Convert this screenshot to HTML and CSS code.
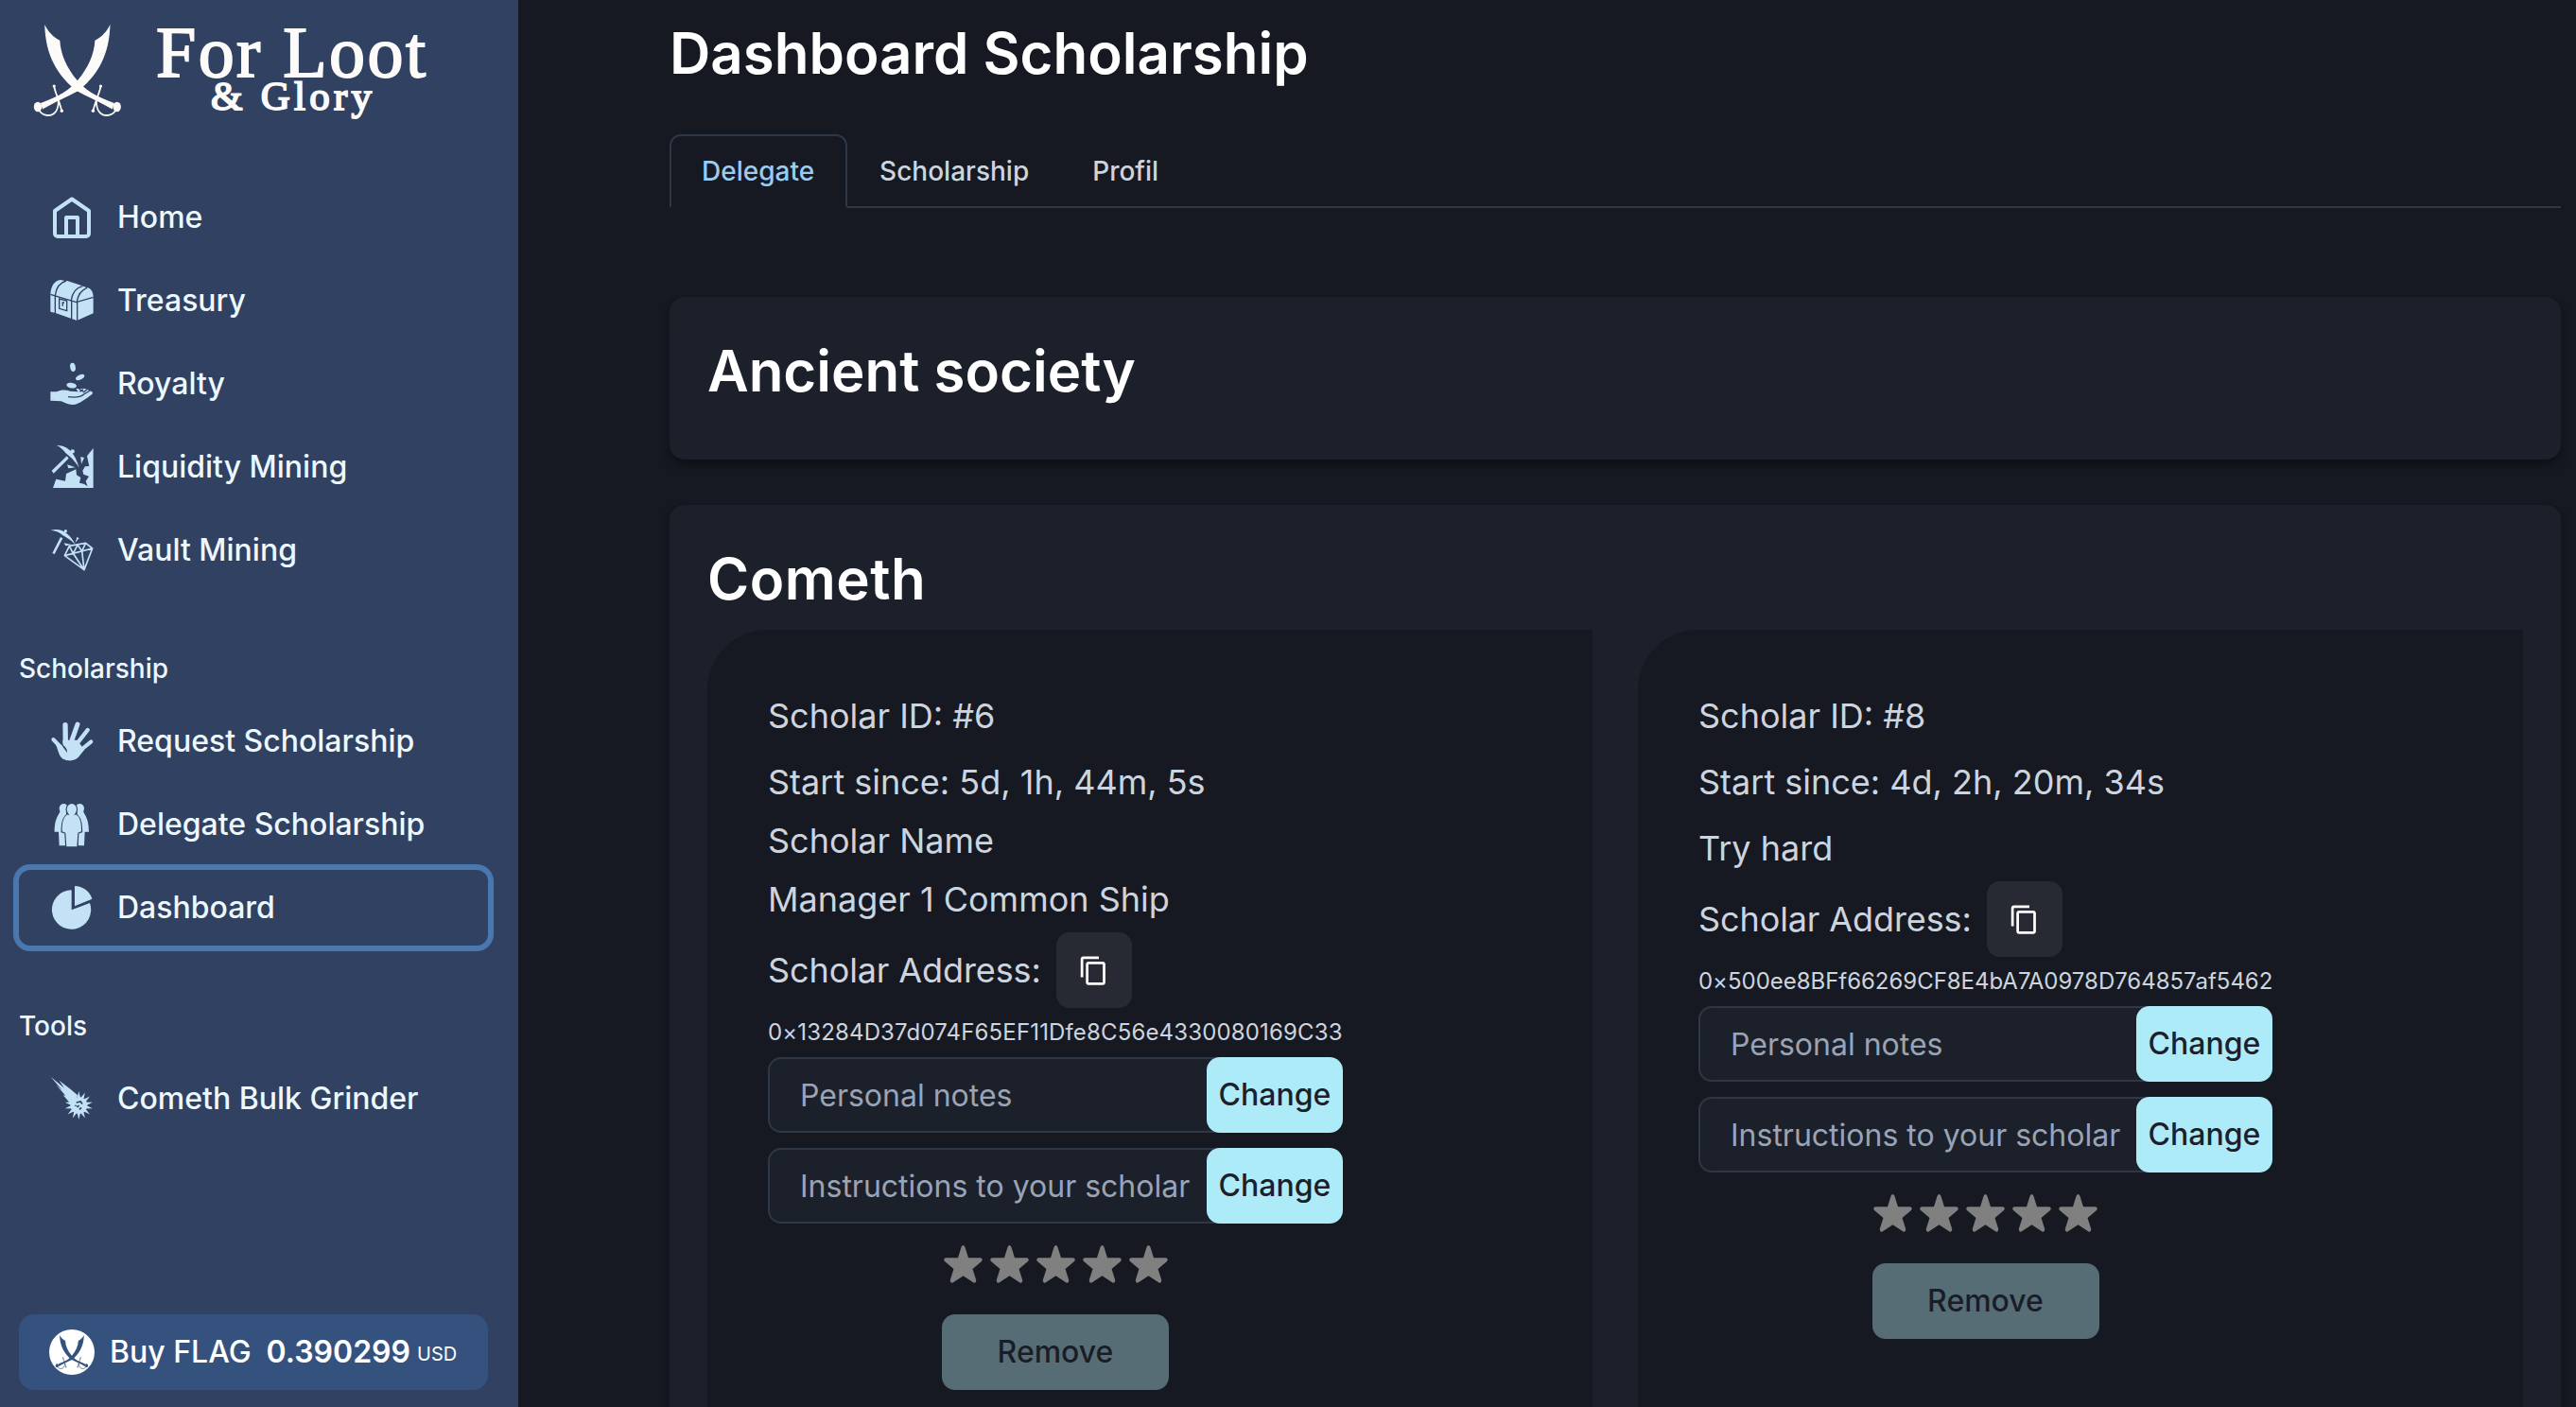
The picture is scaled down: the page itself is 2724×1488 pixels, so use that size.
FILE: index.html
```html
<!DOCTYPE html>
<html lang="en">
<head>
<meta charset="utf-8">
<title>For Loot &amp; Glory – Dashboard Scholarship</title>
<link rel="stylesheet" href="styles.css">
</head>
<body>
<svg class="defs" width="0" height="0" aria-hidden="true">
  <symbol id="sword" viewBox="34 24 96 102">
    <path d="M116.5 26C113 33 108 39 100.400 42.700C99.500 58 93 72 82 85C75 93 68 98 60.700 101.500C54 104.500 48 107 43 109L45 115.500C51 112 57 109 64 105.500C71 102 77 99 82 96.500C91 90 101 79 107 67C113 55 116 42 116.500 26Z"/>
    <ellipse cx="40" cy="113" rx="4.200" ry="5.300"/>
    <path class="sword-guard" d="M57.200 91.500C58 96 59.500 99 61 103.500S64 112 65.200 117M41.500 117C44.500 121 47 122 50.500 122C58 122 61.800 116 61.800 107"/>
    <circle cx="57.200" cy="91" r="1.600"/><circle cx="65.300" cy="117.300" r="1.700"/>
  </symbol>
  <symbol id="swords" viewBox="34 24 96 102">
    <use href="#sword" x="34" y="24" width="96" height="102"/>
    <use href="#sword" x="34" y="24" width="96" height="102" transform="translate(163.700 0) scale(-1 1)"/>
  </symbol>
  <symbol id="copy" viewBox="0 0 24 24">
    <path d="M16 1H4c-1.100 0-2 .9-2 2v14h2V3h12V1zm3 4H8c-1.100 0-2 .9-2 2v14c0 1.100.9 2 2 2h11c1.100 0 2-.9 2-2V7c0-1.100-.9-2-2-2zm0 16H8V7h11v14z"/>
  </symbol>
  <symbol id="star" viewBox="0 0 41 40">
    <path d="M20.500 0Q19.300 0 18.600 1.800L15 13.300H2Q-1 14.500 1 17L10.500 25L6.700 37Q7 40.500 9.500 39.500L20.500 32.300L31.500 39.500Q34 40.500 34.300 37L30.500 25L40 17Q42 14.500 39 13.300H26L22.400 1.800Q21.700 0 20.500 0Z"/>
  </symbol>
</svg>

<div class="app">
  <aside class="sidebar">
    <a class="logo">
      <svg class="logo-mark"><use href="#swords"/></svg>
      <svg class="logo-name" viewBox="0 0 290 126">
        <text x="-1" y="81" font-size="76" textLength="285" lengthAdjust="spacing">For Loot</text>
        <text x="57" y="116" font-size="43" textLength="170" lengthAdjust="spacing">&amp; Glory</text>
      </svg>
    </a>

    <nav class="nav">
      <a class="nav-item">
        <svg class="icon icon-line" viewBox="0 0 48 48"><path d="M24 4.500L6 17V41a3 3 0 0 0 3 3H39a3 3 0 0 0 3-3V17ZM18 44V24H30V44"/></svg>
        <span>Home</span>
      </a>
      <a class="nav-item">
        <svg class="icon" viewBox="36 27 144 144">
          <path d="M40 80C41 54 52 35 72 33L86 36L93 36L130 48L152 56C168 58 176 70 176 87V139L124 162L56 138L40 134Z"/>
          <path class="cut" d="M40 79L122 104L176 88M125 104V162M107 99V157M55 84V140M55 82C58 60 69 42 90 36M106 98C109 74 122 58 142 53M124 102C127 82 137 66 156 58"/>
          <path class="cut" d="M68 93L92 99V131L68 124Z"/><path class="cut" d="M79 103V116M77 105H84"/>
        </svg>
        <span>Treasury</span>
      </a>
      <a class="nav-item">
        <svg class="icon" viewBox="36 291 144 144">
          <ellipse cx="111" cy="310" rx="8.500" ry="14" transform="rotate(-10 111 310)"/>
          <ellipse cx="134" cy="342" rx="15" ry="7.500" transform="rotate(-27 134 342)"/>
          <ellipse cx="107" cy="368" rx="16" ry="8.500" transform="rotate(10 107 368)"/>
          <path d="M40 388H60C75 380 90 382 103 386L128 388L121 378H150L172 388Q176 392 172 396C155 408 136 424 118 428C100 432 84 422 74 418L40 416Z"/>
          <path class="cut" d="M96 404C118 407 136 405 146 396L166 384M128 376L146 389L156 380M133 388L144 380"/>
        </svg>
        <span>Royalty</span>
      </a>
      <a class="nav-item">
        <svg class="icon" viewBox="36 555 144 144">
          <path d="M60 558C78 557 94 566 102 574C116 588 124 606 131 629C121 614 112 602 102 594L88 582C80 572 72 564 60 558Z"/>
          <path d="M44 638L92 592L98 599L50 647Z"/><circle cx="110" cy="577" r="6.500"/>
          <path d="M136 594L147 597L138 617ZM93 619L119 628L97 631Z"/>
          <path d="M176 567V693H48L58 665L87 671L90 648L121 634L123 652L136 660L132 677L146 680L158 688L152 672L162 656L145 650L142 638L150 625L163 624L156 592Z"/>
        </svg>
        <span>Liquidity Mining</span>
      </a>
      <a class="nav-item">
        <svg class="icon" viewBox="36 819 144 144">
          <path d="M41 827C62 822 78 826 92 838C104 848 112 858 118 872C104 858 94 852 80 844C70 834 58 829 41 827Z"/>
          <path d="M72 849L79 853L53 903L46 900Z"/><circle cx="88" cy="830" r="5"/>
          <path d="M119 867L124 849L131 852ZM83 868L108 873L88 877Z"/>
          <path class="facet" d="M85 908L100 877L152 868L173 885L147 953ZM85 908L173 885M100 877L112 901L147 953M112 901L126 874L140 893L147 953M140 893L152 868"/>
        </svg>
        <span>Vault Mining</span>
      </a>
    </nav>

    <h6 class="nav-label">Scholarship</h6>
    <nav class="nav">
      <a class="nav-item">
        <svg class="icon" viewBox="36 30 144 144">
          <path class="finger f16" d="M87 50L88 110"/><path class="finger f15" d="M126 48L106 104"/>
          <path class="finger f13" d="M158 66L122 112"/><path class="finger f12" d="M169 103L126 138"/>
          <path class="finger f12" d="M49 96L72 120"/>
          <path d="M52 104C62 118 64 138 72 150C82 166 118 169 130 151L148 128L124 98H79V108L92 128L93 138L76 115L62 104Z"/>
        </svg>
        <span>Request Scholarship</span>
      </a>
      <a class="nav-item">
        <svg class="icon" viewBox="36 294 144 144">
          <g id="bystander"><ellipse cx="82" cy="315" rx="14" ry="15"/><path d="M70 325C68 335 53 345 53 389H66L68 433H87L90 334V320Z"/></g>
          <use href="#bystander" transform="translate(215 0) scale(-1 1)"/>
          <g class="front"><path d="M97 333H118C131 339 139 352 138 388L127 392L124 436H91L88 392L77 388C76 352 84 339 97 333Z"/><ellipse cx="107.500" cy="318" rx="15.500" ry="18"/></g>
          <path d="M99 328H116V345H99Z"/>
        </svg>
        <span>Delegate Scholarship</span>
      </a>
      <a class="nav-item active">
        <svg class="icon" viewBox="36 558 144 144"><path d="M107 574A62 62 0 1 0 165 615L107 637ZM117 561V625L172 602A58 58 0 0 0 117 561Z"/></svg>
        <span>Dashboard</span>
      </a>
    </nav>

    <h6 class="nav-label">Tools</h6>
    <nav class="nav">
      <a class="nav-item">
        <svg class="icon" viewBox="36 1164 144 144">
          <path d="M41 1166L84 1202L68 1178L104 1206L128 1226L102 1250L80 1224L88 1226L58 1192L78 1210Z"/>
          <circle cx="130" cy="1257" r="27"/>
          <polygon id="spike" points="130,1212 141,1257 130,1302 119,1257"/>
          <use href="#spike" transform="rotate(26 130 1257)"/><use href="#spike" transform="rotate(51 130 1257)"/>
          <use href="#spike" transform="rotate(77 130 1257)"/><use href="#spike" transform="rotate(103 130 1257)"/>
          <use href="#spike" transform="rotate(129 130 1257)"/><use href="#spike" transform="rotate(154 130 1257)"/>
          <path class="crater" d="M122 1248L136 1245L141 1253M124 1262L131 1258M138 1264L132 1270M120 1256V1260"/>
        </svg>
        <span>Cometh Bulk Grinder</span>
      </a>
    </nav>

    <a class="buy">
      <span class="coin"><svg><use href="#swords"/></svg></span>
      <span class="buy-name">Buy FLAG</span>
      <span class="buy-price">0.390299</span>
      <span class="buy-unit">USD</span>
    </a>
  </aside>

  <main class="main">
    <h1 class="title">Dashboard Scholarship</h1>
    <div class="tabs">
      <button class="tab selected">Delegate</button>
      <button class="tab">Scholarship</button>
      <button class="tab">Profil</button>
    </div>

    <section class="panel">
      <h2 class="title">Ancient society</h2>
    </section>

    <section class="panel games">
      <h2 class="title">Cometh</h2>
      <div class="scholars">
        <article class="scholar">
          <div class="scholar-body">
            <p class="line">Scholar ID: #6</p>
            <p class="line">Start since: 5d, 1h, 44m, 5s</p>
            <p class="line long-name">Scholar Name<br>Manager 1 Common Ship</p>
            <div class="address-row"><span>Scholar Address:</span><button class="copy"><svg><use href="#copy"/></svg></button></div>
            <p class="address loose">0×13284D37d074F65EF11Dfe8C56e4330080169C33</p>
            <div class="field"><input type="text" placeholder="Personal notes"><button class="change">Change</button></div>
            <div class="field"><input type="text" placeholder="Instructions to your scholar"><button class="change">Change</button></div>
            <div class="stars"><svg><use href="#star"/></svg><svg><use href="#star"/></svg><svg><use href="#star"/></svg><svg><use href="#star"/></svg><svg><use href="#star"/></svg></div>
            <button class="remove">Remove</button>
          </div>
        </article>
        <article class="scholar">
          <div class="scholar-body narrow">
            <p class="line">Scholar ID: #8</p>
            <p class="line">Start since: 4d, 2h, 20m, 34s</p>
            <p class="line">Try hard</p>
            <div class="address-row"><span>Scholar Address:</span><button class="copy"><svg><use href="#copy"/></svg></button></div>
            <p class="address">0×500ee8BFf66269CF8E4bA7A0978D764857af5462</p>
            <div class="field"><input type="text" placeholder="Personal notes"><button class="change">Change</button></div>
            <div class="field"><input type="text" placeholder="Instructions to your scholar"><button class="change">Change</button></div>
            <div class="stars"><svg><use href="#star"/></svg><svg><use href="#star"/></svg><svg><use href="#star"/></svg><svg><use href="#star"/></svg><svg><use href="#star"/></svg></div>
            <button class="remove">Remove</button>
          </div>
        </article>
      </div>
    </section>
  </main>
</div>
</body>
</html>
```
FILE: styles.css
```css
:root {
  --side: #304162;
  --page: #171922;
  --panel: #1c202b;
  --line: #2e3746;
  --ice: #c4e2f6;
  --cyan: #aeebf8;
}

* { box-sizing: border-box; margin: 0; padding: 0; }

html, body { height: 100%; }

body {
  overflow: hidden;
  background: var(--page);
  color: #ccd5df;
  font: 400 32px/48px Inter, sans-serif;
}

button, input { border: 0; font: inherit; color: inherit; }
.defs { position: absolute; }

.app { display: flex; height: 100vh; }

/* Sidebar */
.sidebar {
  display: flex;
  flex-direction: column;
  flex: none;
  width: 548px;
  height: 100vh;
  padding: 0 32px 18px 20px;
  background: var(--side);
  color: #edf7fe;
}

.logo { display: flex; gap: 36px; height: 190px; padding-left: 14px; color: #fdfafa; fill: currentColor; }
.logo-mark { width: 96px; height: 102px; margin-top: 24px; }
.logo-name {
  width: 290px;
  height: 126px;
  overflow: visible;
  font-family: "Liberation Serif", serif;
  stroke: currentColor;
  stroke-width: 1.8;
}
.sword-guard { fill: none; stroke: currentColor; stroke-width: 1.8; }

.nav { display: flex; flex-direction: column; gap: 8px; }
.nav-item {
  display: flex;
  align-items: center;
  gap: 24px;
  height: 80px;
  padding-left: 32px;
  border-radius: 12px;
  font-weight: 500;
}
.nav-item.active { box-shadow: 0 0 0 6px #4a77ad; }
.nav-label { margin: 61px 0 13px; height: 48px; font-size: 28px; font-weight: 500; }

.icon { width: 48px; height: 48px; flex: none; fill: var(--ice); }
.icon-line { fill: none; stroke: var(--ice); stroke-width: 4; stroke-linejoin: round; }
.cut { fill: none; stroke: var(--side); stroke-width: 4; }
.facet { fill: none; stroke: var(--ice); stroke-width: 5; stroke-linejoin: round; }
.finger { stroke: var(--ice); stroke-linecap: round; }
.f16 { stroke-width: 16; }
.f15 { stroke-width: 15; }
.f13 { stroke-width: 13; }
.f12 { stroke-width: 12; }
.front { stroke: var(--side); stroke-width: 7; paint-order: stroke; }
.crater { fill: none; stroke: var(--side); stroke-width: 5; }

.buy {
  display: flex;
  align-items: center;
  height: 80px;
  margin-top: auto;
  padding-left: 32px;
  border-radius: 16px;
  background: #35527f;
  color: #fff;
  font-weight: 500;
}
.coin { display: grid; place-items: center; width: 48px; height: 48px; margin-right: 16px; border-radius: 50%; background: #fff; }
.coin svg { width: 36px; height: 38px; fill: #35527f; color: #35527f; }
.buy-price { margin-left: 16px; font-weight: 600; }
.buy-unit { margin: 3px 0 0 7px; font-size: 20px; font-weight: 400; }

/* Main column */
.main { display: flex; flex-direction: column; flex: 1; min-width: 0; padding: 19px 16px 0 160px; }
.title { color: #fff; font-size: 60px; font-weight: 600; line-height: 74px; }

.tabs { display: flex; margin-top: 49px; border-bottom: 2px solid var(--line); }
.tab {
  height: 78px;
  margin-bottom: -2px;
  padding: 0 31px 0 32px;
  border: 2px solid transparent;
  border-radius: 12px 12px 0 0;
  background: none;
  font-size: 28px;
  font-weight: 500;
}
.tab.selected { padding-right: 33px; border-color: var(--line) var(--line) var(--page); color: #9ccbf1; }

.panel {
  height: 172px;
  margin-top: 94px;
  padding: 41px 40px 0;
  border-radius: 16px;
  background: var(--panel);
  box-shadow: 0 8px 12px -2px rgba(0, 0, 0, .3), 0 4px 8px -2px rgba(0, 0, 0, .2);
}
.games {
  display: flex;
  flex-direction: column;
  flex: 1;
  margin-top: 48px;
  border-radius: 16px 16px 0 0;
}
.games .title { letter-spacing: .5px; }

.scholars { display: grid; flex: 1; grid-template-columns: 1fr 1fr; gap: 48px; margin-top: 17px; }
.scholar { padding: 60px 64px 0; border-radius: 64px 0 0 0; background: var(--page); }
.scholar-body { width: 608px; }
.scholar-body.narrow { width: 607px; }
.line { margin-bottom: 8px; font-size: 36px; line-height: 62px; }
.long-name { margin-top: -8px; }
.address-row { display: flex; align-items: center; gap: 16px; height: 80px; margin-top: -4px; font-size: 36px; letter-spacing: -.1px; }
.copy { display: grid; place-items: center; width: 80px; height: 80px; border-radius: 14px; background: #282a33; }
.copy svg { width: 33px; height: 33px; fill: #fff; }
.address { margin: 8px 0; font-size: 24px; line-height: 36px; letter-spacing: -.03px; white-space: nowrap; }
.address.loose { letter-spacing: .15px; }
.field { display: flex; margin-bottom: 16px; }
.field input {
  flex: 1;
  min-width: 0;
  height: 80px;
  margin-right: -40px;
  padding: 0 32px;
  border: 2px solid var(--line);
  border-radius: 14px;
  background: var(--panel);
}
.field input::placeholder { color: #99a4b6; opacity: 1; }
.change { position: relative; width: 144px; height: 80px; border-radius: 14px; background: var(--cyan); color: #1c202b; font-weight: 500; }
.stars { display: flex; justify-content: center; gap: 8px; margin: 23px 0 33px; }
.stars svg { width: 41px; height: 40px; fill: #808080; }
.remove { display: block; width: 240px; height: 80px; margin: 0 auto; border-radius: 14px; background: #566d76; color: #1a1d27; font-weight: 500; }
```
